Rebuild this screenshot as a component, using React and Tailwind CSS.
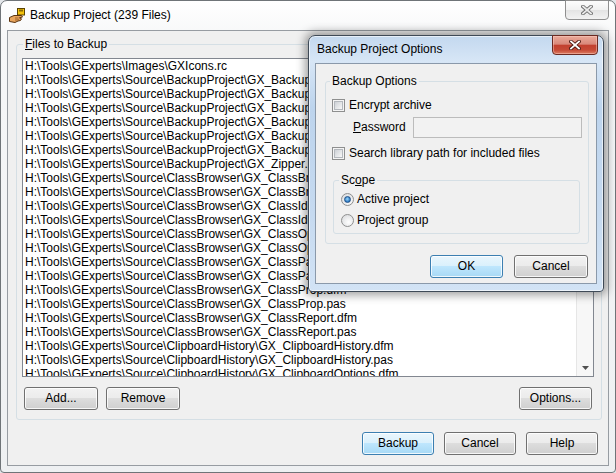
import React from 'react';

const SRC = 'H:\\Tools\\GExperts\\Source\\';

const files = [
  'H:\\Tools\\GExperts\\Images\\GXIcons.rc',
  SRC + 'BackupProject\\GX_Backup.dfm',
  SRC + 'BackupProject\\GX_Backup.pas',
  SRC + 'BackupProject\\GX_BackupConfig.dfm',
  SRC + 'BackupProject\\GX_BackupConfig.pas',
  SRC + 'BackupProject\\GX_BackupOptions.dfm',
  SRC + 'BackupProject\\GX_BackupOptions.pas',
  SRC + 'BackupProject\\GX_Zipper.pas',
  SRC + 'ClassBrowser\\GX_ClassBrowser.dfm',
  SRC + 'ClassBrowser\\GX_ClassBrowser.pas',
  SRC + 'ClassBrowser\\GX_ClassIdentify.dfm',
  SRC + 'ClassBrowser\\GX_ClassIdentify.pas',
  SRC + 'ClassBrowser\\GX_ClassOptions.dfm',
  SRC + 'ClassBrowser\\GX_ClassOptions.pas',
  SRC + 'ClassBrowser\\GX_ClassParsing.dfm',
  SRC + 'ClassBrowser\\GX_ClassParsing.pas',
  SRC + 'ClassBrowser\\GX_ClassProp.dfm',
  SRC + 'ClassBrowser\\GX_ClassProp.pas',
  SRC + 'ClassBrowser\\GX_ClassReport.dfm',
  SRC + 'ClassBrowser\\GX_ClassReport.pas',
  SRC + 'ClipboardHistory\\GX_ClipboardHistory.dfm',
  SRC + 'ClipboardHistory\\GX_ClipboardHistory.pas',
  SRC + 'ClipboardHistory\\GX_ClipboardOptions.dfm',
  SRC + 'ClipboardHistory\\GX_ClipboardOptions.pas',
];

const Button = ({ children, w = 'w-[74px]', primary = false }) => (
  <button
    className={`${w} h-[23px] shrink-0 rounded-[3px] border text-[12px] leading-[15px] text-black shadow-[inset_0_0_0_1px_rgba(255,255,255,0.8)] ${
      primary
        ? 'border-[#3c7fb1] bg-[linear-gradient(#eaf6fd,#d9f0fc_50%,#bee6fd_50%,#a7d9f5)]'
        : 'border-[#707070] bg-[linear-gradient(#f2f2f2,#ebebeb_50%,#dddddd_50%,#cfcfcf)]'
    }`}
  >
    {children}
  </button>
);

const CheckBox = () => (
  <span className="w-[13px] h-[13px] shrink-0 border border-[#8e8f8f] bg-[#f4f4f4] p-[1px] flex">
    <span className="flex-1 border border-[#b4b8bd] bg-[linear-gradient(135deg,#cdd1d6,#f8f8f8)]" />
  </span>
);

const Radio = ({ checked }) => (
  <span className="w-[13px] h-[13px] shrink-0 rounded-full border border-[#8e8f8f] bg-[radial-gradient(circle_at_60%_65%,#ffffff,#d4d6d9)] flex items-center justify-center">
    {checked && (
      <span className="w-[7px] h-[7px] rounded-full border border-[#1d4f86] bg-[radial-gradient(circle_at_45%_40%,#9ad8fb,#2a76c0_70%)]" />
    )}
  </span>
);

const CloseGlyph = ({ outline, fill }) => (
  <svg width="12" height="10" viewBox="0 0 12 10">
    <path d="M2 1.5 L10 8.5 M10 1.5 L2 8.5" stroke={outline} strokeWidth="3.6" strokeLinecap="square" />
    <path d="M2 1.5 L10 8.5 M10 1.5 L2 8.5" stroke={fill} strokeWidth="1.8" strokeLinecap="square" />
  </svg>
);

const AppIcon = () => (
  <svg width="16" height="16" viewBox="0 0 16 16">
    <rect x="8.5" y="0.5" width="7" height="6.5" fill="#f3c20c" stroke="#5b4300" />
    <rect x="10" y="1.5" width="4" height="2" fill="#8a6a00" />
    <path
      d="M0.5 9.5 L5 7.5 L12.5 7.5 L13.5 9 L10.5 9.8 L12.5 10.8 L11.5 12.5 L9 13 L6 14.5 L0.5 13.5 Z"
      fill="#e8a45c"
      stroke="#5a3410"
      strokeWidth="1"
      strokeLinejoin="round"
    />
    <path d="M6 10 L9.5 10 M6 12 L10 11.8" stroke="#8a5220" strokeWidth="0.8" />
  </svg>
);

const ListBox = () => (
  <div className="ml-[5px] mt-[6px] w-[572px] h-[319px] flex border border-[#828790] bg-white">
    <div className="flex-1 overflow-hidden">
      {files.map((f, i) => (
        <div key={i} className="h-[14px] leading-[14px] pl-[2px] whitespace-nowrap">
          {f}
        </div>
      ))}
    </div>
    <div className="w-[17px] flex flex-col border-l border-[#e6e6e6] bg-[#f7f7f7]">
      <div className="h-[17px]" />
      <div className="mx-[1px] h-[27px] rounded-[2px] border border-[#979797] bg-[linear-gradient(90deg,#f3f3f3,#e8e8e8_50%,#d9d9d9)]" />
      <div className="flex-1" />
      <div className="h-[17px] flex items-center justify-center">
        <svg width="7" height="4" viewBox="0 0 7 4">
          <path d="M0 0 L7 0 L3.5 4 Z" fill="#505050" />
        </svg>
      </div>
    </div>
  </div>
);

const OptionsDialog = () => (
  <div className="absolute left-[308px] top-[35px] w-[296px] h-[257px] flex flex-col px-[6px] pb-[7px] rounded-t-[7px] rounded-b-[4px] border border-[#3f4a57] bg-[linear-gradient(180deg,#c3d8ef,#d7e6f6_10%,#bdd4ed_28%,#c6daf0_70%,#d2e3f5)] shadow-[inset_0_0_0_1px_rgba(255,255,255,0.6),0_0_10px_3px_rgba(0,0,0,0.38)]">
    <div className="h-[27px] flex items-start">
      <span className="self-center pl-[2px] leading-[15px]">Backup Project Options</span>
      <div className="ml-auto -mr-[1px] -mt-[1px] w-[46px] h-[20px] flex items-center justify-center rounded-b-[4px] border border-[#6b2a22] bg-[linear-gradient(#eaaa9a,#d9887a_45%,#c2402f_52%,#c64a36_78%,#dc7c62)] shadow-[inset_0_0_0_1px_rgba(255,210,200,0.45)]">
        <CloseGlyph outline="#4a1710" fill="#ffffff" />
      </div>
    </div>
    <div className="flex-1 flex flex-col border border-[#8a99aa] bg-[#f0f0f0]">
      <fieldset className="mt-[10px] ml-[9px] w-[264px] rounded-[3px] border border-[#d5dfe5]">
        <legend className="ml-[4px] px-[2px] leading-[15px]">Backup Options</legend>
        <div className="flex items-center h-[15px] mt-[9px] ml-[6px] gap-[4px]">
          <CheckBox />
          <span className="leading-[15px]">Encrypt archive</span>
        </div>
        <div className="flex items-center h-[21px] mt-[4px] ml-[27px]">
          <span className="w-[60px] leading-[15px]">
            <span className="underline">P</span>assword
          </span>
          <div className="w-[169px] h-[21px] border border-[#bcbcbc] bg-[#f2f2f2]" />
        </div>
        <div className="flex items-center h-[15px] mt-[8px] ml-[6px] gap-[4px]">
          <CheckBox />
          <span className="leading-[15px]">Search library path for included files</span>
        </div>
        <fieldset className="mt-[12px] ml-[7px] mb-[9px] w-[247px] rounded-[3px] border border-[#d5dfe5]">
          <legend className="ml-[5px] px-[2px] leading-[15px]">
            Sc<span className="underline">o</span>pe
          </legend>
          <div className="flex items-center h-[15px] mt-[4px] ml-[7px] gap-[3px]">
            <Radio checked />
            <span className="leading-[15px]">Active project</span>
          </div>
          <div className="flex items-center h-[15px] mt-[6px] mb-[5px] ml-[7px] gap-[3px]">
            <Radio />
            <span className="leading-[15px]">Project group</span>
          </div>
        </fieldset>
      </fieldset>
      <div className="flex justify-end gap-[11px] mt-[11px] pr-[8px]">
        <Button w="w-[73px]" primary>OK</Button>
        <Button>Cancel</Button>
      </div>
    </div>
  </div>
);

export default function App() {
  return (
    <div className="relative w-[616px] h-[473px] overflow-hidden bg-[#e4e7ea] text-[12px] text-black font-['Liberation_Sans',Arial,sans-serif]">
      <div className="w-full h-full flex flex-col px-[6px] pb-[6px] rounded-t-[7px] rounded-b-[4px] border border-[#6f7478] bg-[linear-gradient(#ffffff,#f6f7f8_8%,#eef0f2)]">
        <div className="h-[29px] flex items-start">
          <div className="self-center ml-[2px] flex items-center">
            <AppIcon />
            <span className="ml-[5px] leading-[15px]">Backup Project (239 Files)</span>
          </div>
          <div className="ml-auto -mt-[1px] w-[44px] h-[20px] flex items-center justify-center rounded-b-[4px] border border-[#8f8f8f] bg-[linear-gradient(#fdfdfd,#f1f1f1_50%,#e3e3e3_50%,#f2f2f2)]">
            <CloseGlyph outline="#6e6e6e" fill="#ececec" />
          </div>
        </div>
        <div className="flex-1 flex flex-col border border-[#979ca2] bg-[#f0f0f0]">
          <fieldset className="mt-[6px] ml-[8px] w-[586px] rounded-[3px] border border-[#d5dfe5]">
            <legend className="ml-[6px] px-[2px] leading-[15px]">
              <span className="underline">F</span>iles to Backup
            </legend>
            <ListBox />
            <div className="flex mt-[10px] ml-[7px] mr-[9px] mb-[9px]">
              <Button>Add...</Button>
              <div className="ml-[8px]">
                <Button>Remove</Button>
              </div>
              <div className="ml-auto">
                <Button w="w-[73px]">Options...</Button>
              </div>
            </div>
          </fieldset>
          <div className="flex justify-end gap-[10px] mt-[12px] pr-[10px]">
            <Button w="w-[72px]" primary>Backup</Button>
            <Button w="w-[72px]">Cancel</Button>
            <Button w="w-[72px]">Help</Button>
          </div>
        </div>
      </div>
      <OptionsDialog />
    </div>
  );
}
